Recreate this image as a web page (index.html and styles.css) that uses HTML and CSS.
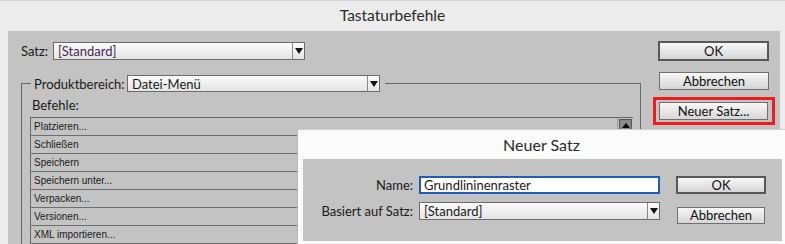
FILE: index.html
```html
<!DOCTYPE html>
<html lang="de">
<head>
<meta charset="utf-8">
<title>Tastaturbefehle</title>
<link rel="stylesheet" href="styles.css">
</head>
<body>
<div class="window">
  <div class="titlebar">Tastaturbefehle</div>
  <div class="panel">
    <div class="left">
      <div class="set-row">
        <span class="label">Satz:</span>
        <div class="select set-select"><span class="value purple">[Standard]</span><span class="arrow"></span></div>
      </div>
      <fieldset class="area">
        <legend class="area-legend">
          <span class="label">Produktbereich:</span>
          <div class="select area-select"><span class="value">Datei-Menü</span><span class="arrow"></span></div>
        </legend>
        <div class="cmd-label">Befehle:</div>
        <div class="list">
          <div class="rows">
            <div class="row">Platzieren...</div>
            <div class="row">Schließen</div>
            <div class="row">Speichern</div>
            <div class="row">Speichern unter...</div>
            <div class="row">Verpacken...</div>
            <div class="row">Versionen...</div>
            <div class="row">XML importieren...</div>
          </div>
          <div class="scrollbar"><span class="scroll-up"></span></div>
        </div>
      </fieldset>
    </div>
    <div class="right">
      <div class="btn default main-btn">OK</div>
      <div class="btn main-btn">Abbrechen</div>
      <div class="highlight"><div class="btn main-btn">Neuer Satz...</div></div>
    </div>
  </div>
</div>

<div class="dialog">
  <div class="dialog-title">Neuer Satz</div>
  <div class="dialog-body">
    <span class="label dlabel">Name:</span>
    <div class="input">Grundlininenraster</div>
    <div class="btn default dbtn">OK</div>
    <span class="label dlabel">Basiert auf Satz:</span>
    <div class="select dselect"><span class="value">[Standard]</span><span class="arrow"></span></div>
    <div class="btn dbtn dbtn2">Abbrechen</div>
  </div>
</div>
</body>
</html>
```
FILE: styles.css
```css
* { box-sizing: border-box; }
html, body { margin: 0; padding: 0; }
body {
  width: 785px;
  height: 244px;
  overflow: hidden;
  background: #ececec;
  font-family: Lato, "Liberation Sans", sans-serif;
  font-size: 13px;
  color: #1a1a1a;
  position: relative;
}
.window { height: 244px; display: flex; flex-direction: column; border-top: 1px solid #d6d6d6; overflow: hidden; }
.titlebar {
  height: 30px;
  line-height: 29px;
  text-align: center;
  font-size: 15.5px;
  color: #2a2a2a;
}
.panel {
  flex: 1;
  min-height: 0;
  margin: 0 5px 0 8px;
  background: #c3c3c3;
  display: flex;
  padding: 10px 0 0 13px;
  overflow: hidden;
}
.left { width: 620px; }
.set-row { display: flex; align-items: center; height: 18px; margin-top: 1px; }
.label { white-space: nowrap; }
.set-row .label { width: 32px; }
.select {
  position: relative;
  height: 18px;
  border: 1px solid #6c6c6c;
  background: linear-gradient(#fbfbfb, #e4e4e4);
  display: flex;
  align-items: center;
  padding-left: 4px;
}
.select .value { flex: 1; line-height: 16px; }
.purple { color: #4a2458; }
.select .arrow {
  width: 12px;
  height: 100%;
  border-left: 1px solid #8a8a8a;
  display: flex;
  align-items: center;
  justify-content: center;
}
.select .arrow::after {
  content: "";
  border-left: 4px solid transparent;
  border-right: 4px solid transparent;
  border-top: 6px solid #111;
}
.set-select { width: 252px; }
.area {
  margin: 15px 0 0 0;
  padding: 0 0 0 8px;
  border: 1px solid #6a6a6a;
  border-bottom: none;
  height: 180px;
}
.area-legend {
  display: flex;
  align-items: center;
  padding: 0 5px 0 3px;
  margin-left: 1px;
}
.area-legend .label { width: 93px; }
.area-select { width: 253px; height: 17px; }
.cmd-label { margin: 4px 0 0 2px; height: 18px; line-height: 18px; }
.list {
  margin-top: 3px;
  width: 603px;
  display: flex;
  border-top: 1px solid #666;
  border-left: 1px solid #666;
}
.rows { flex: 1; }
.row {
  height: 18px;
  border-bottom: 1px solid #6e6e6e;
  font-family: "Liberation Sans", sans-serif;
  font-size: 10px;
  line-height: 17px;
  padding-left: 3px;
  color: #1a1a1a;
}
.scrollbar { width: 16px; padding: 1px 0 0 1px; border-left: 1px solid #9a9a9a; }
.scroll-up {
  display: flex;
  width: 13px;
  height: 13px;
  background: #8a8a8a;
  border: 1px solid #555;
  align-items: center;
  justify-content: center;
}
.scroll-up::after {
  content: "";
  border-left: 4px solid transparent;
  border-right: 4px solid transparent;
  border-bottom: 5px solid #000;
}
.right { margin-left: 17px; display: flex; flex-direction: column; }
.btn {
  border: 1px solid #6f6f6f;
  background: linear-gradient(#f7f7f7, #d6d6d6);
  text-align: center;
  color: #111;
}
.btn.default { border: 2px solid #585858; }
.main-btn { width: 110px; height: 18px; line-height: 16px; margin-left: 1px; }
.right .default { width: 111px; height: 20px; margin-left: 0; }
.right .btn + .btn { margin-top: 11px; }
.highlight {
  margin: 7px 0 0 -5px;
  width: 122px;
  height: 28px;
  border: 3px solid #ee1c1c;
  padding: 2px 0 0 2px;
}
.highlight .main-btn { width: 109px; margin-left: 1px; }

/* Overlay dialog */
.dialog {
  position: absolute;
  left: 297px;
  top: 129px;
  width: 488px;
  height: 115px;
  background: #fbfbfb;
  border-left: 1px solid #b8b8b8;
  border-top: 1px solid #d0d0d0;
}
.dialog-title {
  height: 29px;
  line-height: 30px;
  text-align: center;
  font-size: 16px;
  color: #2a2a2a;
}
.dialog-body {
  margin: 0 3px 0 5px;
  height: 82px;
  background: #c3c3c3;
  display: grid;
  grid-template-columns: 92px 241px 90px;
  column-gap: 6px;
  grid-template-rows: 18px 18px;
  row-gap: 8px;
  padding: 17px 0 0 18px;
  align-items: center;
}
.dlabel { text-align: right; }
.input {
  height: 18px;
  border: 2px solid #1f5cbe;
  background: #fff;
  padding-left: 3px;
  line-height: 14px;
}
.dselect { height: 18px; }
.dbtn { margin-left: 10px; height: 18px; line-height: 15px; width: 90px; }
.dbtn2 { margin-left: 11px; width: 88px; margin-top: 8px; height: 17px; border: 1px solid #6f6f6f; }
```
